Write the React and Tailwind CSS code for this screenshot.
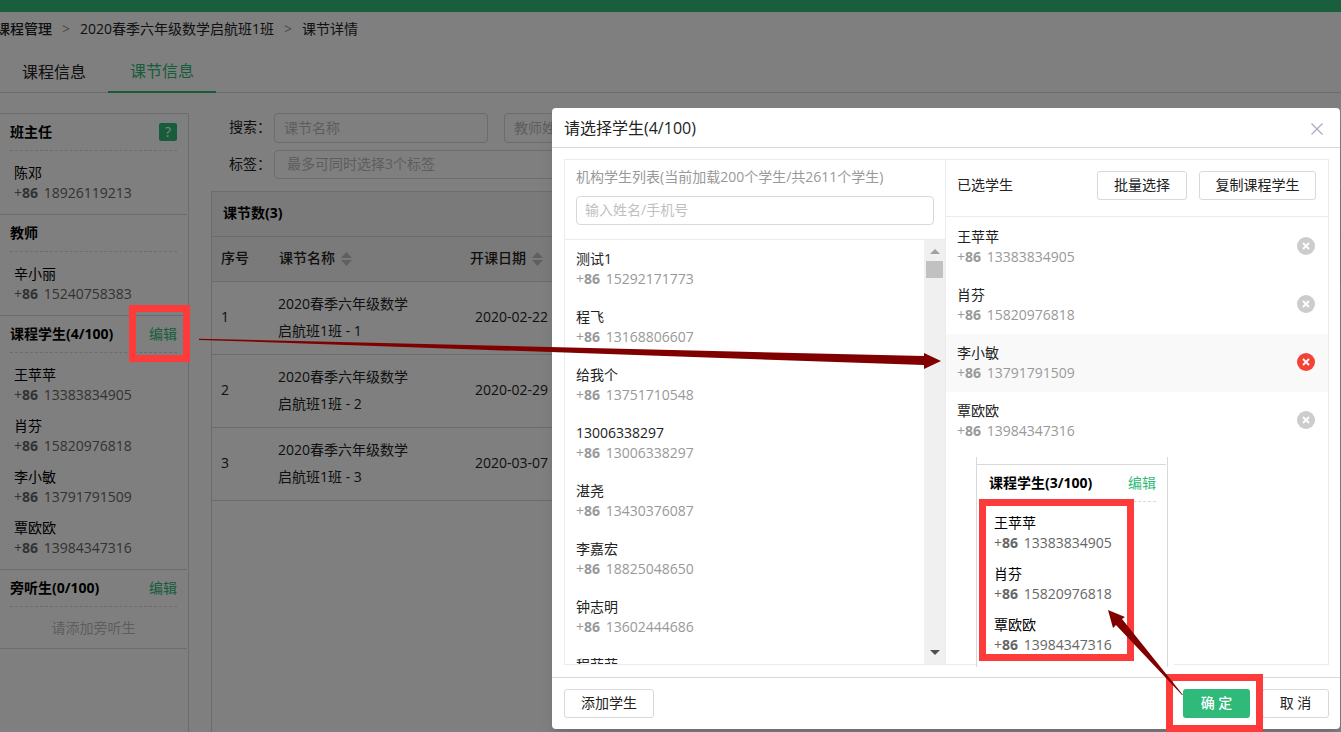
import React, { useState } from 'react';

const TEACHER = [{ name: '陈邓', phone: '18926119213' }];
const TUTOR = [{ name: '辛小丽', phone: '15240758383' }];

const STUDENTS = [
  { name: '王苹苹', phone: '13383834905' },
  { name: '肖芬', phone: '15820976818' },
  { name: '李小敏', phone: '13791791509' },
  { name: '覃欧欧', phone: '13984347316' },
];

const ALL_STUDENTS = [
  { name: '测试1', phone: '15292171773' },
  { name: '程飞', phone: '13168806607' },
  { name: '给我个', phone: '13751710548' },
  { name: '13006338297', phone: '13006338297' },
  { name: '湛尧', phone: '13430376087' },
  { name: '李嘉宏', phone: '18825048650' },
  { name: '钟志明', phone: '13602444686' },
  { name: '程菲菲', phone: '' },
];

const LESSONS = [
  { id: 1, name: '2020春季六年级数学启航班1班 - 1', date: '2020-02-22' },
  { id: 2, name: '2020春季六年级数学启航班1班 - 2', date: '2020-02-29' },
  { id: 3, name: '2020春季六年级数学启航班1班 - 3', date: '2020-03-07' },
];

const Person = ({ name, phone, phoneClass }) => (
  <div className="leading-5">
    <div>{name}</div>
    {phone && (
      <div className={phoneClass}>
        +<b>86</b> <span className="ml-0.5">{phone}</span>
      </div>
    )}
  </div>
);

const Section = ({ title, action, people, empty }) => (
  <section className="mr-px border-b border-[#d9d9d9]">
    <div className="mx-2.5 flex h-[37px] items-center justify-between border-b border-dashed border-[#d9d9d9]">
      <h3 className="font-bold text-black">{title}</h3>
      {action}
    </div>
    {people && (
      <ul className="pt-3 pl-3.5 text-black">
        {people.map((p) => (
          <li key={p.phone} className="pb-[11px]">
            <Person {...p} phoneClass="text-[#666]" />
          </li>
        ))}
      </ul>
    )}
    {empty && <p className="py-2.5 text-center leading-[21px] text-[#bbb]">{empty}</p>}
  </section>
);

const EditButton = () => (
  <button type="button" className="text-[#2fba79]">编辑</button>
);

const Sorter = () => (
  <svg className="ml-1.5 inline-block" width="11" height="14" viewBox="0 0 11 14" fill="#bfbfbf">
    <path d="M5.500 0 L11 6 H0 Z M0 8 H11 L5.500 14 Z" />
  </svg>
);

const Remove = ({ name, active }) => (
  <button type="button" aria-label={`移除${name}`}>
    <svg width="18" height="18" viewBox="0 0 18 18">
      <circle cx="9" cy="9" r="9" fill={active ? '#f44336' : '#ccc'} />
      <path d="M6 6 L12 12 M12 6 L6 12" stroke="#fff" strokeWidth="1.800" />
    </svg>
  </button>
);

const outline = 'h-[29px] rounded-[3px] border border-[#d9d9d9] bg-white pb-0.5 text-[#222]';

const CoursePage = () => (
  <div className="flex h-full flex-col">
    <div className="h-3 shrink-0 bg-[#33be7c]" />
    <nav className="-ml-1 flex h-[34px] shrink-0 items-center gap-2.5 text-[#222]">
      <a href="#courses" className="font-medium">课程管理</a>
      <span className="text-[#999]">&gt;</span>
      <a href="#course">2020春季六年级数学启航班1班</a>
      <span className="text-[#999]">&gt;</span>
      <span>课节详情</span>
    </nav>
    <div className="flex h-[47px] shrink-0 border-b border-[#d9d9d9] text-base text-[#222]">
      <button type="button" className="h-[47px] w-27 pt-1">课程信息</button>
      <button type="button" className="h-[47px] w-27 border-b-2 border-[#2fba79] pt-1 text-[#2fba79]">课节信息</button>
    </div>

    <div className="flex min-h-0 flex-1 gap-[22px] pt-5">
      <aside className="w-[189px] shrink-0 border-t border-r border-[#d9d9d9]">
        <Section
          title="班主任"
          people={TEACHER}
          action={
            <button type="button" className="size-[18px] rounded-xs bg-[#2fba79] leading-[18px] text-white">?</button>
          }
        />
        <Section title="教师" people={TUTOR} />
        <Section title="课程学生(4/100)" people={STUDENTS} action={<EditButton />} />
        <Section title="旁听生(0/100)" empty="请添加旁听生" action={<EditButton />} />
      </aside>

      <main className="flex min-w-0 flex-1 flex-col">
        <div className="flex items-center pl-[18px]">
          <label htmlFor="lesson" className="w-[45px] pb-0.5 text-[#222]">搜索：</label>
          <input id="lesson" placeholder="课节名称" className="h-[30px] w-[214px] rounded-sm border border-[#d9d9d9] px-[9px] pb-0.5 placeholder:text-[#bbb]" />
          <input aria-label="教师姓名" placeholder="教师姓名" className="ml-4 h-[30px] w-[214px] rounded-sm border border-[#d9d9d9] px-[9px] pb-0.5 placeholder:text-[#bbb]" />
        </div>
        <div className="mt-[7px] flex items-center pl-[18px]">
          <label htmlFor="tags" className="w-[45px] pb-0.5 text-[#222]">标签：</label>
          <input id="tags" placeholder="最多可同时选择3个标签" className="h-[29px] w-[444px] rounded-sm border border-[#d9d9d9] px-3 pb-0.5 placeholder:text-[#bbb]" />
        </div>

        <div className="mt-3 flex-1 border-t border-l border-[#d9d9d9]">
          <h2 className="flex h-[45px] items-center border-b border-[#d9d9d9] bg-[#f5f5f5] pb-[3px] pl-[11px] font-bold text-black">课节数(3)</h2>
          <table className="w-full table-fixed text-left text-[#222]">
            <thead>
              <tr className="h-11 border-b border-[#d9d9d9] bg-[#f5f5f5]">
                <th className="w-[57px] pb-0.5 pl-[9px] font-medium">序号</th>
                <th className="w-[191px] pb-0.5 pl-2.5 font-medium">课节名称<Sorter /></th>
                <th className="pb-0.5 pl-2.5 font-medium">开课日期<Sorter /></th>
              </tr>
            </thead>
            <tbody>
              {LESSONS.map((l) => (
                <tr key={l.id} className="h-[73px] border-b border-[#d9d9d9]">
                  <td className="pb-0.5 pl-[9px]">{l.id}</td>
                  <td className="pr-12 pb-0.5 pl-[9px] leading-[27px]">{l.name}</td>
                  <td className="pb-0.5 pl-[15px]">{l.date}</td>
                </tr>
              ))}
            </tbody>
          </table>
        </div>
      </main>
    </div>
  </div>
);

const StudentDialog = () => {
  const [keyword, setKeyword] = useState('');

  return (
    <div role="dialog" aria-label="请选择学生" className="flex w-[788px] flex-col rounded-sm bg-white text-[#222] shadow-lg">
      <header className="flex h-10 shrink-0 items-center justify-between border-b border-[#d9d9d9] px-3">
        <h2 className="text-base">请选择学生(4/100)</h2>
        <button type="button" aria-label="关闭" className="pt-0.5 pr-1">
          <svg width="14" height="14" viewBox="0 0 14 14" stroke="#a8adc3" strokeWidth="1.300">
            <path d="M1.500 1.500 L12.500 12.500 M12.500 1.500 L1.500 12.500" />
          </svg>
        </button>
      </header>

      <div className="mt-[11px] mr-[11px] mb-3 ml-3 flex min-h-0 flex-1 border border-[#ebebeb]">
        <div className="flex w-[381px] flex-col border-r border-[#ebebeb]">
          <div className="h-20 shrink-0 border-b border-[#ebebeb] px-[11px] pt-1.5">
            <label htmlFor="keyword" className="block h-[30px] leading-[22px] text-[#999]">
              机构学生列表(当前加载200个学生/共2611个学生)
            </label>
            <input
              id="keyword"
              value={keyword}
              onChange={(e) => setKeyword(e.target.value)}
              placeholder="输入姓名/手机号"
              className="block h-[29px] w-full rounded-sm border border-[#d9d9d9] px-2 pb-0.5 placeholder:text-[#bfbfbf]"
            />
          </div>
          <div className="flex min-h-0 flex-1">
            <ul className="flex-1 overflow-hidden">
              {ALL_STUDENTS.map((s) => (
                <li key={s.name} className="h-[58px] pt-[9px] pl-[11px]">
                  <Person {...s} phoneClass="text-[#999]" />
                </li>
              ))}
            </ul>
            {/* scrollbar */}
            <div className="flex w-[21px] flex-col items-center bg-[#f0f0f0] pt-[9px] pb-[9px]">
              <svg width="10" height="5" viewBox="0 0 10 5"><path d="M0 5 L5 0 L10 5 Z" fill="#a0a0a0" /></svg>
              <div className="mt-[7px] size-[17px] bg-[#c1c1c1]" />
              <svg className="mt-auto" width="10" height="5" viewBox="0 0 10 5"><path d="M0 0 H10 L5 5 Z" fill="#505050" /></svg>
            </div>
          </div>
        </div>

        <div className="min-w-0 flex-1">
          <div className="flex h-[57px] items-start justify-end gap-3 border-b border-[#ebebeb] pt-[11px] pr-3 pl-[11px]">
            <h3 className="mr-auto leading-[27px]">已选学生</h3>
            <button type="button" className={`${outline} w-[90px]`}>批量选择</button>
            <button type="button" className={`${outline} w-[117px]`}>复制课程学生</button>
          </div>
          <ul className="pt-px">
            {STUDENTS.map((s, i) => (
              <li key={s.phone} className={`flex h-[58px] items-start justify-between pt-[9px] pr-[13px] pl-[11px] ${i === 2 ? 'bg-[#f9f9f9]' : ''}`}>
                <Person {...s} phoneClass="text-[#999]" />
                <div className="flex h-[37px] items-center">
                  <Remove name={s.name} active={i === 2} />
                </div>
              </li>
            ))}
          </ul>
        </div>
      </div>

      <footer className="flex shrink-0 gap-3 border-t border-[#d9d9d9] py-[11px] pr-[11px] pl-3">
        <button type="button" className={`${outline} mr-auto w-[90px]`}>添加学生</button>
        <button type="button" className="h-[29px] w-[67px] rounded-[3px] bg-[#2fba79] pb-0.5 font-medium text-white">确 定</button>
        <button type="button" className={`${outline} w-[67px]`}>取 消</button>
      </footer>
    </div>
  );
};

// result of the edit, pinned over the dialog
const ResultNote = () => (
  <div className="absolute top-[457px] right-[167px] h-[210px] w-[198px] bg-white">
    <div className="h-full w-[192px] border-x border-[#d9d9d9] pt-[7px]">
      <div className="mr-px border-t border-[#d9d9d9]">
        <div className="mr-2.5 ml-3 flex h-[37px] items-center justify-between border-b border-dashed border-[#d9d9d9]">
          <h3 className="font-bold text-black">课程学生(3/100)</h3>
          <EditButton />
        </div>
        <ul className="pt-[11px] pl-[17px] text-black">
          {STUDENTS.filter((s) => s.name !== '李小敏').map((s) => (
            <li key={s.phone} className="pb-[11px]">
              <Person {...s} phoneClass="text-[#666]" />
            </li>
          ))}
        </ul>
      </div>
    </div>
  </div>
);

const Marks = () => (
  <svg className="pointer-events-none absolute top-0 left-0" width="1341" height="732" viewBox="0 0 1341 732">
    <g fill="none" stroke="#fd3b3b" strokeWidth="7">
      <rect x="132.500" y="308.500" width="54" height="50" />
      <rect x="982.500" y="502.500" width="148" height="155" />
      <rect x="1169.500" y="677.500" width="90" height="51" />
    </g>
    <g fill="#800000">
      <path d="M199 338.700 L924 356 V353 L941 361 L924 369 V365 L199 339.900 Z" />
      <path d="M1183 695 L1122 619 L1125 617 L1108 610 L1113 628 L1116 625 L1182 695 Z" />
    </g>
  </svg>
);

const App = () => (
  <div className="relative h-screen overflow-hidden bg-white font-['Open_Sans','Noto_Sans_CJK_SC',sans-serif] text-sm">
    <CoursePage />
    <div className="absolute inset-0 flex justify-end bg-black/50 pt-27 pr-px pb-[3px]">
      <StudentDialog />
    </div>
    <ResultNote />
    <Marks />
  </div>
);

export default App;
